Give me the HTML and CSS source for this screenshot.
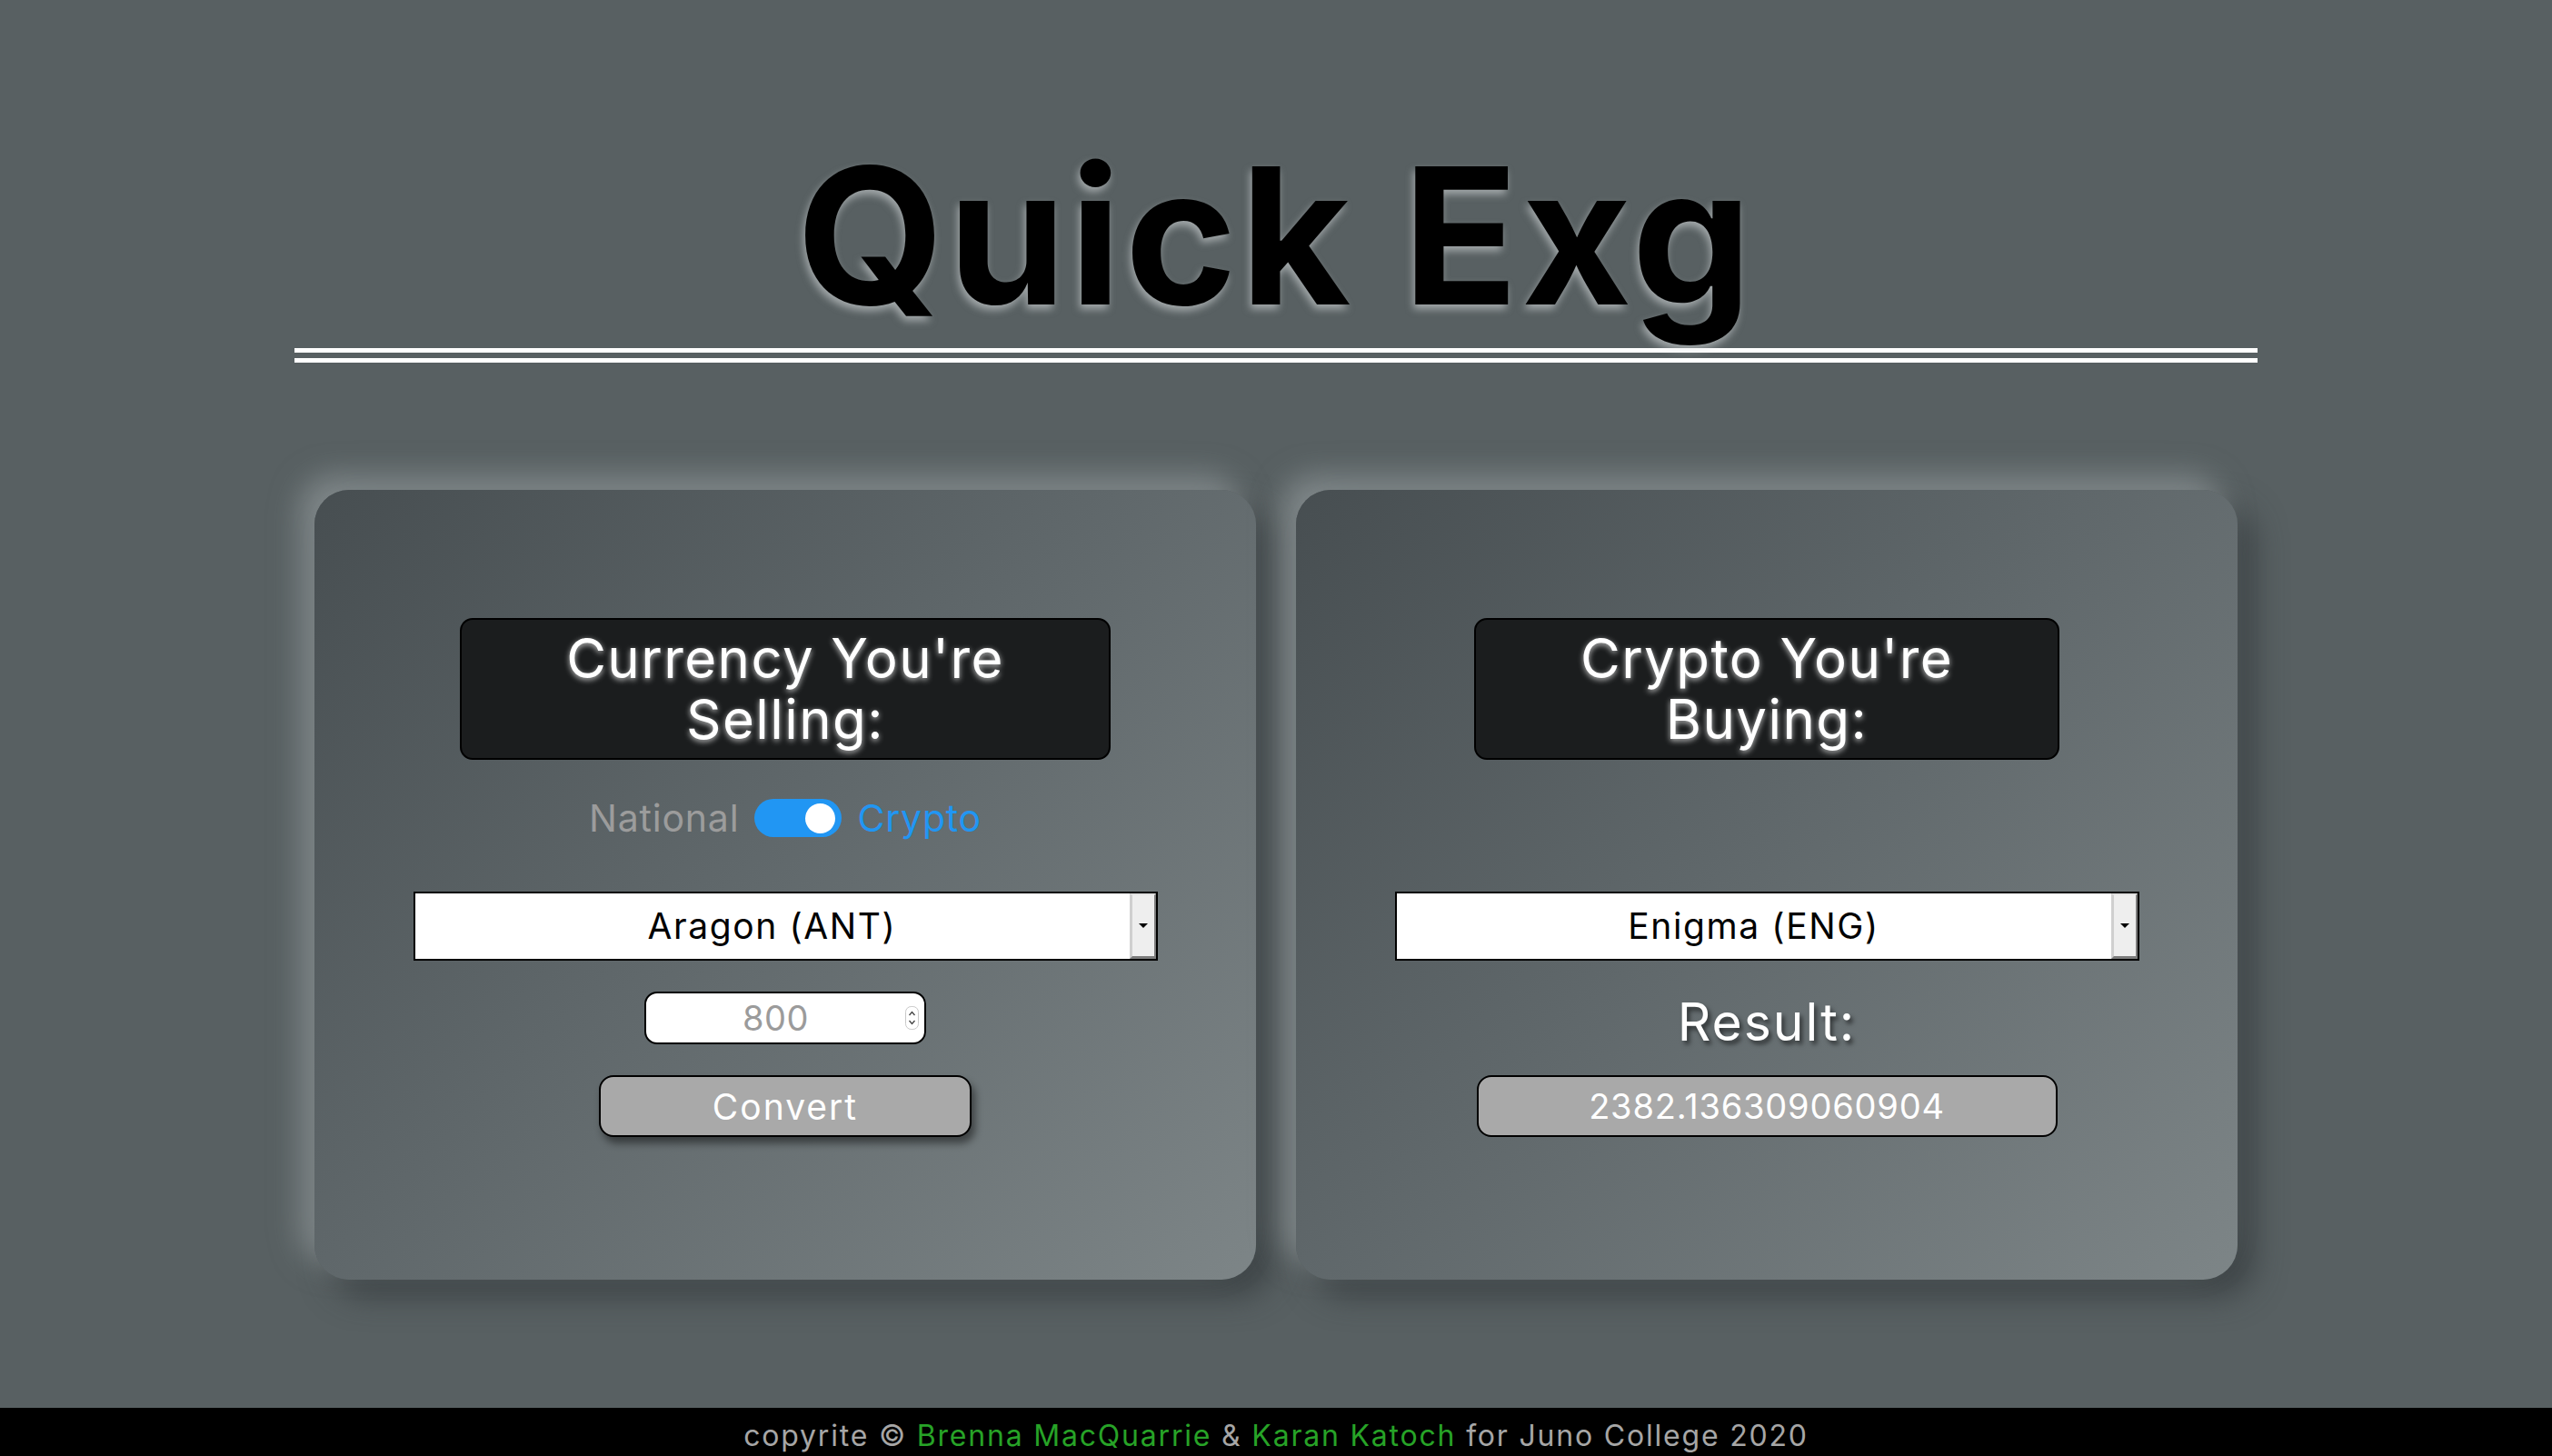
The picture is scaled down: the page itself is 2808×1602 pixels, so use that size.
FILE: index.html
```html
<!DOCTYPE html>
<html lang="en">
<head>
<meta charset="utf-8">
<title>Quick Exg</title>
<link rel="stylesheet" href="styles.css">
</head>
<body>
<header class="site-header">
  <h1 class="title">Quick Exg</h1>
</header>
<main class="panels">
  <section class="card">
    <h2 class="card-heading">Currency You're<br>Selling:</h2>
    <div class="toggle-row">
      <span class="toggle-label national">National</span>
      <span class="switch"><span class="knob"></span></span>
      <span class="toggle-label crypto">Crypto</span>
    </div>
    <div class="select">
      <span class="select-value">Aragon (ANT)</span>
      <span class="select-btn"><span class="caret"></span></span>
    </div>
    <div class="number-input">
      <span class="number-value">800</span>
      <svg class="spinner" width="15" height="26" viewBox="0 0 15 26">
        <rect x="0.5" y="0.5" width="14" height="25" rx="6" fill="#fff" stroke="#c8c8c8"/>
        <path d="M4.5 10 L7.5 6.5 L10.5 10" fill="none" stroke="#444" stroke-width="1.3"/>
        <path d="M4.5 16 L7.5 19.5 L10.5 16" fill="none" stroke="#444" stroke-width="1.3"/>
      </svg>
    </div>
    <button class="convert">Convert</button>
  </section>
  <section class="card">
    <h2 class="card-heading">Crypto You're<br>Buying:</h2>
    <div class="toggle-row spacer"></div>
    <div class="select">
      <span class="select-value">Enigma (ENG)</span>
      <span class="select-btn"><span class="caret"></span></span>
    </div>
    <h3 class="result-label">Result:</h3>
    <div class="result-box">2382.136309060904</div>
  </section>
</main>
<footer class="footer">
  <p class="footer-text">copyrite © <span class="name">Brenna MacQuarrie</span> &amp; <span class="name">Karan Katoch</span> for Juno College 2020</p>
</footer>
</body>
</html>
```

FILE: styles.css
```css
* { box-sizing: border-box; }

body {
  margin: 0;
  background: #586062;
  font-family: Inter, "Noto Sans", sans-serif;
  color: #fff;
}

.site-header {
  padding-top: 155px;
}

.title {
  width: 2160px;
  margin: 0 auto;
  padding-bottom: 19px;
  border-bottom: 16px double #fff;
  font-size: 209px;
  line-height: 1;
  font-weight: 700;
  color: #000;
  text-align: center;
  letter-spacing: 4px;
  text-shadow: -2px 5px 8px rgba(225, 230, 232, 0.55);
}

.panels {
  display: flex;
  justify-content: center;
  gap: 44px;
  margin: 140px 0 141px;
}

.card {
  width: 1036px;
  padding: 141px 0 157px;
  border-radius: 38px;
  background: linear-gradient(135deg, #474e51 0%, #5f676a 45%, #7d8587 100%);
  box-shadow: -16px -16px 32px rgba(160, 168, 170, 0.55), 18px 18px 34px rgba(50, 56, 58, 0.7);
  display: flex;
  flex-direction: column;
  align-items: center;
}

.card-heading {
  margin: 0;
  padding: 9px 115px;
  background: #1b1d1e;
  border: 2px solid #000;
  border-radius: 14px;
  font-size: 60px;
  line-height: 67px;
  font-weight: 400;
  letter-spacing: 1.4px;
  text-align: center;
  color: #fff;
  text-shadow: 0 2px 6px rgba(255, 255, 255, 0.75);
}

.toggle-row {
  margin-top: 43px;
  height: 42px;
  display: flex;
  align-items: center;
  gap: 17px;
}

.toggle-label {
  font-size: 41px;
  line-height: 42px;
  letter-spacing: 0.8px;
}

.national { color: #9c9c9c; }
.crypto { color: #2196f3; }

.switch {
  width: 96px;
  height: 42px;
  border-radius: 21px;
  background: #2196f3;
  display: flex;
  align-items: center;
  justify-content: flex-end;
  padding-right: 7px;
}

.knob {
  width: 33px;
  height: 33px;
  border-radius: 50%;
  background: #fff;
}

.select {
  margin-top: 60px;
  width: 819px;
  height: 76px;
  background: #fff;
  border: 2px solid #000;
  display: flex;
}

.select-value {
  flex: 1;
  text-align: center;
  color: #000;
  font-size: 39px;
  line-height: 72px;
  letter-spacing: 1.6px;
}

.select-btn {
  width: 29px;
  background: #eeeeee;
  border-top: 2px solid #e2e2e2;
  border-left: 3px solid #cfcfcf;
  border-right: 2px solid #7c7c7c;
  border-bottom: 3px solid #7c7c7c;
  display: flex;
  align-items: center;
  justify-content: center;
}

.caret {
  width: 0;
  height: 0;
  border-left: 5px solid transparent;
  border-right: 5px solid transparent;
  border-top: 5px solid #000;
}

.number-input {
  margin-top: 34px;
  width: 310px;
  height: 58px;
  background: #fff;
  border: 2px solid #000;
  border-radius: 14px;
  display: flex;
  align-items: center;
  padding: 0 6px 0 0;
}

.number-value {
  flex: 1;
  text-align: center;
  color: #9b9b9b;
  font-size: 38px;
  line-height: 54px;
  letter-spacing: 0.5px;
}

.spinner { display: block; }

.convert {
  margin-top: 34px;
  width: 410px;
  height: 68px;
  background: #a9a9a9;
  border: 2px solid #000;
  border-radius: 16px;
  color: #fff;
  font-family: Inter, "Noto Sans", sans-serif;
  font-size: 39px;
  letter-spacing: 2px;
  line-height: 1;
  padding: 0;
  box-shadow: 4px 7px 9px rgba(0, 0, 0, 0.45);
}

.spacer { visibility: hidden; }

.result-label {
  margin: 38px 0 0;
  height: 60px;
  font-size: 57px;
  line-height: 60px;
  font-weight: 400;
  letter-spacing: 2px;
  color: #fff;
  text-shadow: 3px 4px 5px rgba(0, 0, 0, 0.55);
}

.result-box {
  margin-top: 28px;
  width: 639px;
  height: 68px;
  background: #a9a9a9;
  border: 2px solid #000;
  border-radius: 16px;
  color: #fff;
  font-size: 38px;
  line-height: 64px;
  letter-spacing: 0.8px;
  text-align: center;
}

.footer {
  background: #000;
  padding: 7px 0 20px;
}

.footer-text {
  margin: 0;
  text-align: center;
  font-size: 32px;
  line-height: 48px;
  letter-spacing: 1.8px;
  color: #a6a6a6;
}

.name { color: #27a327; }
```
